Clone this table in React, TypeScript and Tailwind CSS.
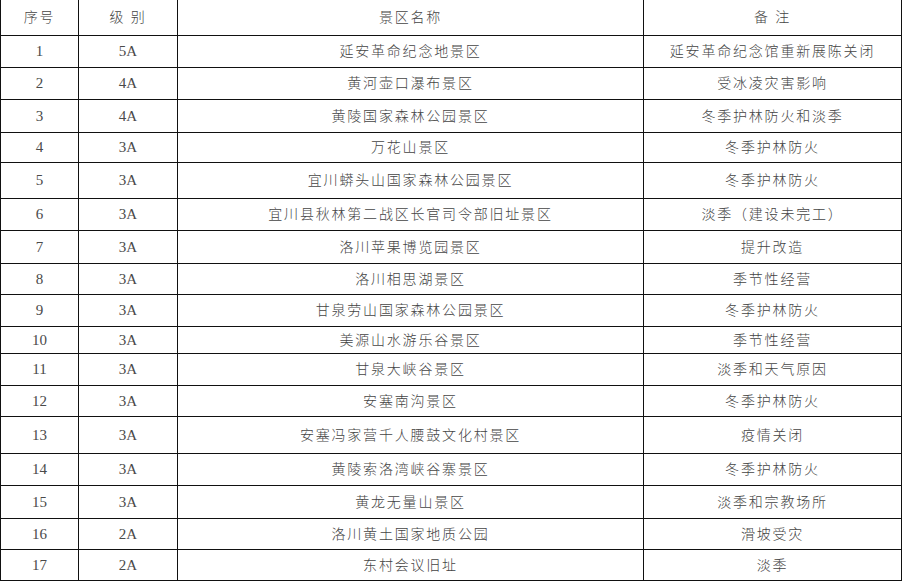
interface Row {
  readonly no: string
  readonly level: string
  readonly name: string
  readonly note: string
  readonly h: string
}

const ROWS: readonly Row[] = [
  { no: '1', level: '5A', name: '延安革命纪念地景区', note: '延安革命纪念馆重新展陈关闭', h: 'h-[32px]' },
  { no: '2', level: '4A', name: '黄河壶口瀑布景区', note: '受冰凌灾害影响', h: 'h-[32px]' },
  { no: '3', level: '4A', name: '黄陵国家森林公园景区', note: '冬季护林防火和淡季', h: 'h-[33px]' },
  { no: '4', level: '3A', name: '万花山景区', note: '冬季护林防火', h: 'h-[30px]' },
  { no: '5', level: '3A', name: '宜川蟒头山国家森林公园景区', note: '冬季护林防火', h: 'h-[36px]' },
  { no: '6', level: '3A', name: '宜川县秋林第二战区长官司令部旧址景区', note: '淡季（建设未完工）', h: 'h-[32px]' },
  { no: '7', level: '3A', name: '洛川苹果博览园景区', note: '提升改造', h: 'h-[33px]' },
  { no: '8', level: '3A', name: '洛川相思湖景区', note: '季节性经营', h: 'h-[31px]' },
  { no: '9', level: '3A', name: '甘泉劳山国家森林公园景区', note: '冬季护林防火', h: 'h-[32px]' },
  { no: '10', level: '3A', name: '美源山水游乐谷景区', note: '季节性经营', h: 'h-[27px]' },
  { no: '11', level: '3A', name: '甘泉大峡谷景区', note: '淡季和天气原因', h: 'h-[32px]' },
  { no: '12', level: '3A', name: '安塞南沟景区', note: '冬季护林防火', h: 'h-[31px]' },
  { no: '13', level: '3A', name: '安塞冯家营千人腰鼓文化村景区', note: '疫情关闭', h: 'h-[37px]' },
  { no: '14', level: '3A', name: '黄陵索洛湾峡谷寨景区', note: '冬季护林防火', h: 'h-[32px]' },
  { no: '15', level: '3A', name: '黄龙无量山景区', note: '淡季和宗教场所', h: 'h-[33px]' },
  { no: '16', level: '2A', name: '洛川黄土国家地质公园', note: '滑坡受灾', h: 'h-[31px]' },
  { no: '17', level: '2A', name: '东村会议旧址', note: '淡季', h: 'h-[31px]' },
]

const FONT = "font-['Liberation_Serif','Noto_Sans_CJK_SC',serif]"
const CELL = 'flex items-center justify-center border-r border-[#111]'
const ROW = 'grid grid-cols-[78px_99px_466px_258px] border-b border-l border-[#111]'

function TableRow({ row }: Readonly<{ row: Row }>): JSX.Element {
  return (
    <div className={`${ROW} ${row.h}`}>
      <div className={`${CELL} text-[15px] text-[#4a4a4a]`}>{row.no}</div>
      <div className={`${CELL} text-[15px] text-[#4a4a4a]`}>{row.level}</div>
      <div className={`${CELL} text-[14px] font-light tracking-[1.8px]`}>{row.name}</div>
      <div className={`${CELL} text-[14px] font-light tracking-[1.8px]`}>{row.note}</div>
    </div>
  )
}

export default function App(): JSX.Element {
  return (
    <div className={`h-[584px] w-[905px] overflow-hidden bg-white text-[#444] ${FONT}`}>
      <div className="w-[902px]">
        <div className={`${ROW} h-[36px] text-[14px] font-light tracking-[1.8px]`}>
          <div className={CELL}>序号</div>
          <div className={CELL}>级 别</div>
          <div className={CELL}>景区名称</div>
          <div className={CELL}>备 注</div>
        </div>
        {ROWS.map((row) => (
          <TableRow key={row.no} row={row} />
        ))}
      </div>
    </div>
  )
}
